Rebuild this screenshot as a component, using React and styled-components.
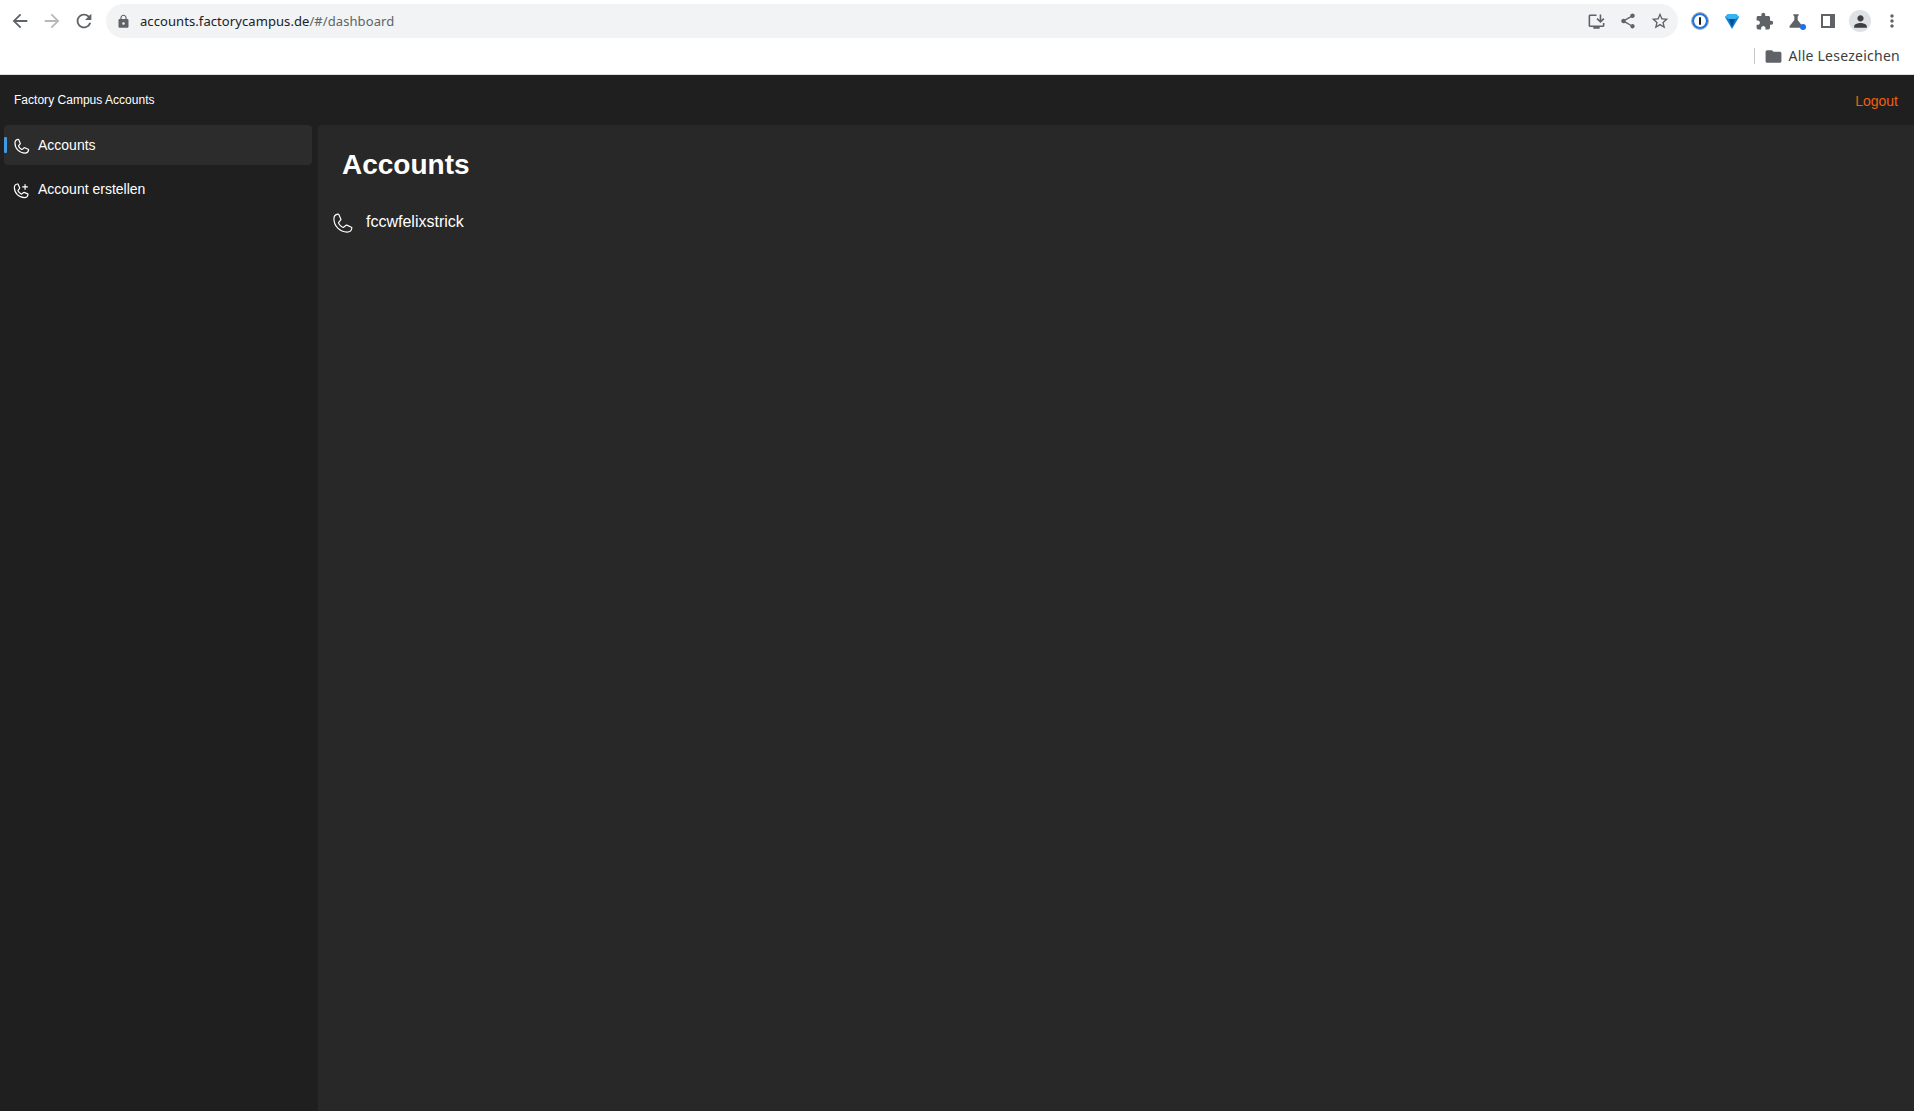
import React from 'react';
import styled, { createGlobalStyle } from 'styled-components';
import { PiPhone, PiPhoneLight, PiPhonePlus } from 'react-icons/pi';
import {
  MdArrowBack,
  MdArrowForward,
  MdRefresh,
  MdLock,
  MdStarBorder,
  MdExtension,
  MdScience,
  MdMoreVert,
  MdPerson,
  MdFolder,
  MdShare,
  MdInstallDesktop,
} from 'react-icons/md';

const GlobalStyle = createGlobalStyle`
  html, body, #root {
    margin: 0;
    padding: 0;
    height: 100%;
  }
  body {
    overflow: hidden;
    background: #1f1f1f;
    font-family: "Liberation Sans", Arial, sans-serif;
  }
`;

const Page = styled.div`
  display: flex;
  flex-direction: column;
  width: 1914px;
  height: 1111px;
`;

const Browser = styled.div`
  height: 74px;
  background: #fff;
  border-bottom: 1px solid #dadce0;
  display: flex;
  flex-direction: column;
`;

const Toolbar = styled.div`
  display: flex;
  align-items: center;
  height: 42px;
`;

const NavButtons = styled.div`
  display: flex;
  align-items: center;
  gap: 10px;
  padding-left: 9px;
  width: 106px;
  box-sizing: border-box;
`;

const IconSlot = styled.span`
  width: 22px;
  height: 22px;
  display: flex;
  align-items: center;
  justify-content: center;
  color: ${(p) => p.$color || '#5f6368'};
  font-size: ${(p) => p.$size || 22}px;
  flex: none;
`;

const Omnibox = styled.div`
  width: 1572px;
  height: 34px;
  background: #f1f3f4;
  border-radius: 17px;
  display: flex;
  align-items: center;
  box-sizing: border-box;
  padding: 0 7px 0 6px;
`;

const Url = styled.div`
  flex: 1;
  margin-left: 6px;
  font: 13px/20px "Noto Sans", sans-serif;
  color: #5f6368;
  letter-spacing: 0.08px;
`;

const UrlHost = styled.span`
  color: #202124;
`;

const Actions = styled.div`
  display: flex;
  align-items: center;
  gap: 10px;
`;

const Extensions = styled.div`
  display: flex;
  align-items: center;
  gap: 10px;
  margin-left: 11px;
`;

const Avatar = styled.span`
  width: 22px;
  height: 22px;
  border-radius: 50%;
  background: #dee1e6;
  color: #3c4043;
  display: flex;
  align-items: center;
  justify-content: center;
  font-size: 19px;
  flex: none;
`;

const BookmarkBar = styled.div`
  display: flex;
  justify-content: flex-end;
  align-items: center;
  height: 28px;
  padding-right: 14px;
`;

const Separator = styled.span`
  width: 1px;
  height: 16px;
  background: #c7c9cc;
  margin-right: 8px;
`;

const BookmarkLabel = styled.span`
  font: 14px/20px "Noto Sans", sans-serif;
  color: #3c4043;
  margin-left: 4px;
  letter-spacing: 0.25px;
`;

const Header = styled.header`
  height: 50px;
  flex: none;
  background: #1f1f1f;
  display: flex;
  align-items: center;
  justify-content: space-between;
  padding: 0 16px 0 14px;
`;

const Brand = styled.div`
  font-size: 12px;
  color: #fff;
  letter-spacing: 0.02px;
`;

const Logout = styled.a`
  font-size: 14px;
  color: #f0600f;
  margin-top: 1px;
`;

const Body = styled.div`
  flex: 1;
  display: flex;
  min-height: 0;
`;

const Sidebar = styled.nav`
  width: 318px;
  flex: none;
  background: #1f1f1f;
  box-sizing: border-box;
  padding: 0 6px 0 4px;
  display: flex;
  flex-direction: column;
  gap: 4px;
`;

const NavItem = styled.a`
  position: relative;
  height: 40px;
  display: flex;
  align-items: center;
  padding-left: 9px;
  border-radius: 4px;
  background: ${(p) => (p.$active ? '#2c2c2c' : 'transparent')};
  color: #fff;
  font-size: 14px;
  ${(p) =>
    p.$active &&
    `&::before {
      content: '';
      position: absolute;
      left: 0;
      top: 12px;
      width: 3px;
      height: 16px;
      background: #4299e1;
      border-radius: 1px;
    }`}
`;

const NavIcon = styled.span`
  width: 16px;
  height: 16px;
  display: flex;
  align-items: center;
  justify-content: center;
  font-size: 19px;
  margin: 2px 9px 0 0;

  svg {
    flex: none;
  }
`;

const Main = styled.main`
  flex: 1;
  background: #282828;
  border-top-left-radius: 4px;
  padding: 24px 14px;
  box-sizing: border-box;
`;

const Title = styled.h1`
  margin: 0 0 0 10px;
  font-size: 28px;
  line-height: 32px;
  font-weight: 700;
  color: #fff;
`;

const AccountRow = styled.div`
  display: flex;
  align-items: center;
  margin-top: 26px;
  color: #fff;
  font-size: 16px;
`;

const RowIcon = styled.span`
  display: flex;
  align-items: center;
  justify-content: center;
  width: 20px;
  font-size: 25px;
  margin: 4px 14px 0 0;

  svg {
    flex: none;
  }
`;

const LabsIcon = styled.span`
  position: relative;
  display: flex;
`;

const Dot = styled.i`
  position: absolute;
  right: 0;
  bottom: 1px;
  width: 6px;
  height: 6px;
  border-radius: 50%;
  background: #1a73e8;
`;

function OnePassword() {
  return (
    <svg width="22" height="22" viewBox="0 0 22 22">
      <circle cx="11" cy="11" r="7" fill="#fff" stroke="#1a73e8" strokeWidth="2.2" />
      <circle cx="11" cy="11" r="8.4" fill="none" stroke="#80868b" strokeWidth="0.8" />
      <rect x="10" y="7" width="2" height="8" rx="1" fill="#202124" />
    </svg>
  );
}

function Diamond() {
  return (
    <svg width="22" height="22" viewBox="0 0 22 22">
      <path d="M4 7 7 4h8l3 3-7 12z" fill="#0b7fd6" />
      <path d="M8 9h6l-3 8z" fill="#0a4f8a" />
      <path d="M7 4h8l3 3-4 2H8L4 7z" fill="#36b3f4" />
    </svg>
  );
}

function SidePanel() {
  return (
    <svg width="22" height="22" viewBox="0 0 22 22">
      <rect x="4" y="4" width="14" height="14" fill="#5f6368" />
      <rect x="6" y="6" width="7" height="10" fill="#fff" />
    </svg>
  );
}

export default function App() {
  return (
    <Page>
      <GlobalStyle />
      <Browser>
        <Toolbar>
          <NavButtons>
            <IconSlot><MdArrowBack /></IconSlot>
            <IconSlot $color="#b6b8bb"><MdArrowForward /></IconSlot>
            <IconSlot><MdRefresh /></IconSlot>
          </NavButtons>
          <Omnibox>
            <IconSlot $size={15}><MdLock /></IconSlot>
            <Url>
              <UrlHost>accounts.factorycampus.de</UrlHost>/#/dashboard
            </Url>
            <Actions>
              <IconSlot $size={19}><MdInstallDesktop /></IconSlot>
              <IconSlot $size={18}><MdShare /></IconSlot>
              <IconSlot $size={20}><MdStarBorder /></IconSlot>
            </Actions>
          </Omnibox>
          <Extensions>
            <OnePassword />
            <Diamond />
            <IconSlot $size={19}><MdExtension /></IconSlot>
            <IconSlot $size={20}>
              <LabsIcon>
                <MdScience />
                <Dot />
              </LabsIcon>
            </IconSlot>
            <SidePanel />
            <Avatar><MdPerson /></Avatar>
            <IconSlot $size={20}><MdMoreVert /></IconSlot>
          </Extensions>
        </Toolbar>
        <BookmarkBar>
          <Separator />
          <IconSlot $size={19}><MdFolder /></IconSlot>
          <BookmarkLabel>Alle Lesezeichen</BookmarkLabel>
        </BookmarkBar>
      </Browser>
      <Header>
        <Brand>Factory Campus Accounts</Brand>
        <Logout>Logout</Logout>
      </Header>
      <Body>
        <Sidebar>
          <NavItem $active>
            <NavIcon><PiPhone /></NavIcon>
            Accounts
          </NavItem>
          <NavItem>
            <NavIcon><PiPhonePlus /></NavIcon>
            Account erstellen
          </NavItem>
        </Sidebar>
        <Main>
          <Title>Accounts</Title>
          <AccountRow>
            <RowIcon><PiPhoneLight /></RowIcon>
            fccwfelixstrick
          </AccountRow>
        </Main>
      </Body>
    </Page>
  );
}
